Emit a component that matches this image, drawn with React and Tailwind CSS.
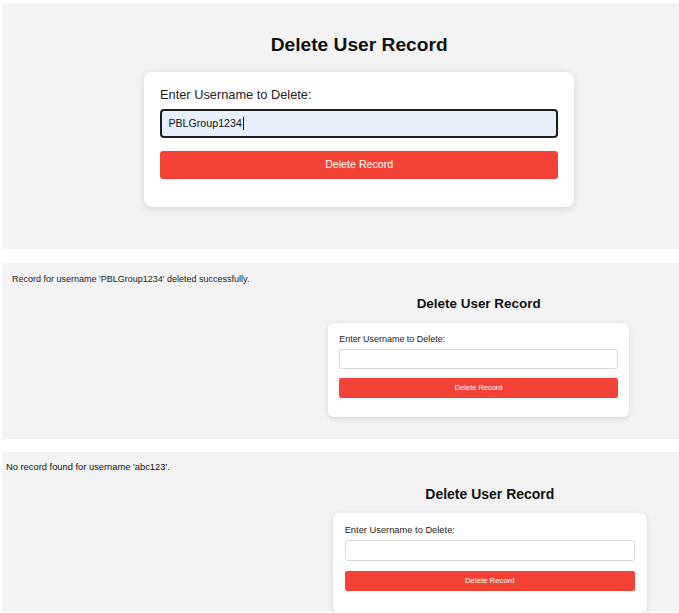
import React from "react";

function DeleteForm({ value, focused }) {
  return (
    <div className="w-[538px]">
      <h2 className="text-[24px] leading-[1.15] font-bold text-center text-[#111] mb-[20px]">
        Delete User Record
      </h2>
      <div className="bg-white rounded-[10px] shadow-[0_2px_10px_rgba(0,0,0,0.12)] px-[20px] pt-[20px] pb-[35px]">
        <label className="block text-[16px] leading-[1.15] text-[#222] mb-[8px]">
          Enter Username to Delete:
        </label>
        {focused ? (
          <div className="h-[36px] w-full rounded-[5px] border-[2.5px] border-[#1c1c1c] bg-[#e8f0fe] px-[8px] flex items-center text-[13.33px] text-[#111]">
            <span>{value}</span>
            <span className="inline-block w-px h-[16px] bg-[#111] ml-px" />
          </div>
        ) : (
          <div className="h-[36px] w-full rounded-[4px] border border-[#d9d9d9] bg-white px-[9px] flex items-center text-[13.33px] text-[#111]">
            {value}
          </div>
        )}
        <button className="mt-[16px] h-[35px] w-full rounded-[4px] bg-[#f44336] text-white text-[13.33px] leading-none flex items-center justify-center">
          Delete Record
        </button>
      </div>
    </div>
  );
}

export default function App() {
  return (
    <div className="min-h-screen bg-white font-['Liberation_Sans',Arial,sans-serif] overflow-hidden">
      <section className="ml-[2px] mt-[3px] h-[246px] bg-[#f3f3f3] pt-[31px] pl-[142px]">
        <div className="[zoom:0.8]">
          <DeleteForm value="PBLGroup1234" focused />
        </div>
      </section>

      <section className="ml-[2px] mt-[14px] h-[176px] bg-[#f3f3f3] pt-[11px]">
        <p className="pl-[10px] text-[9px] leading-[1.15] text-[#222]">
          Record for username 'PBLGroup1234' deleted successfully.
        </p>
        <div className="pl-[326px] pt-[12px]">
          <div className="[zoom:0.56]">
            <DeleteForm value="" />
          </div>
        </div>
      </section>

      <section className="ml-[2px] mt-[13px] h-[160px] bg-[#f3f3f3] pt-[10px] overflow-hidden">
        <p className="pl-[4px] text-[9.33px] leading-[1.15] text-[#111]">
          No record found for username 'abc123'.
        </p>
        <div className="pl-[331px] pt-[13px]">
          <div className="[zoom:0.583]">
            <DeleteForm value="" />
          </div>
        </div>
      </section>
    </div>
  );
}
